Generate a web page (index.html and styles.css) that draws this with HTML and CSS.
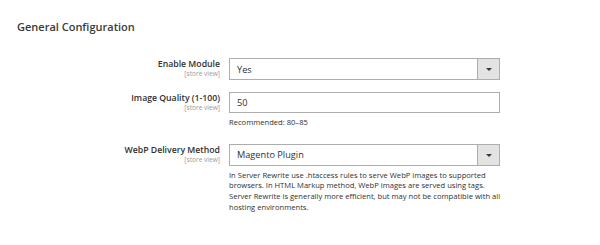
FILE: index.html
```html
<!DOCTYPE html>
<html>
<head>
<meta charset="utf-8">
<link rel="stylesheet" href="styles.css">
</head>
<body>
<div class="page">
  <h2 class="title">General Configuration</h2>
  <div class="form">
    <div class="row">
      <div class="label"><span class="name">Enable Module</span><span class="scope">[store view]</span></div>
      <div class="control">
        <div class="select"><span class="value">Yes</span><span class="arrow"></span></div>
      </div>
    </div>
    <div class="row">
      <div class="label"><span class="name">Image Quality (1-100)</span><span class="scope">[store view]</span></div>
      <div class="control">
        <div class="input"><span class="value">50</span></div>
        <p class="note">Recommended: 80–85</p>
      </div>
    </div>
    <div class="row">
      <div class="label"><span class="name">WebP Delivery Method</span><span class="scope">[store view]</span></div>
      <div class="control">
        <div class="select"><span class="value">Magento Plugin</span><span class="arrow"></span></div>
        <p class="note">In Server Rewrite use .htaccess rules to serve WebP images to supported browsers. In HTML Markup method, WebP images are served using tags. Server Rewrite is generally more efficient, but may not be compatible with all hosting environments.</p>
      </div>
    </div>
  </div>
</div>
</body>
</html>
```

FILE: styles.css
```css
html, body {
  margin: 0;
  padding: 0;
  background: #fff;
}
body {
  font-family: "Open Sans", "Liberation Sans", sans-serif;
  color: #303030;
}
.page {
  padding: 19px 0 0 17px;
}
.title {
  margin: 0;
  font-size: 11px;
  line-height: 15px;
  font-weight: 600;
  color: #3a3a3a;
}
.form {
  margin-top: 24px;
  display: flex;
  flex-direction: column;
  gap: 12px;
}
.row {
  display: grid;
  grid-template-columns: 203px 271px;
  column-gap: 9px;
}
.label {
  display: flex;
  flex-direction: column;
  align-items: flex-end;
  padding-top: 1px;
}
.name {
  font-size: 8.7px;
  font-weight: 600;
  line-height: 11px;
  color: #303030;
}
.scope {
  font-size: 6.6px;
  line-height: 8px;
  color: #9a9a9a;
}
.select, .input {
  box-sizing: border-box;
  height: 22px;
  border: 1px solid #adadad;
  display: flex;
  align-items: center;
  background: #fff;
}
.input {
  height: 21px;
}
.value {
  flex: 1;
  padding-left: 7px;
  font-size: 9.2px;
  color: #303030;
}
.arrow {
  width: 21px;
  align-self: stretch;
  background: #e3e3e3;
  border-left: 1px solid #adadad;
  position: relative;
}
.arrow::after {
  content: "";
  position: absolute;
  left: 8px;
  top: 9px;
  border-left: 3px solid transparent;
  border-right: 3px solid transparent;
  border-top: 3px solid #41362f;
}
.note {
  margin: 4px -5px 4px 0;
  font-size: 7.6px;
  line-height: 10.7px;
  color: #303030;
}
```
